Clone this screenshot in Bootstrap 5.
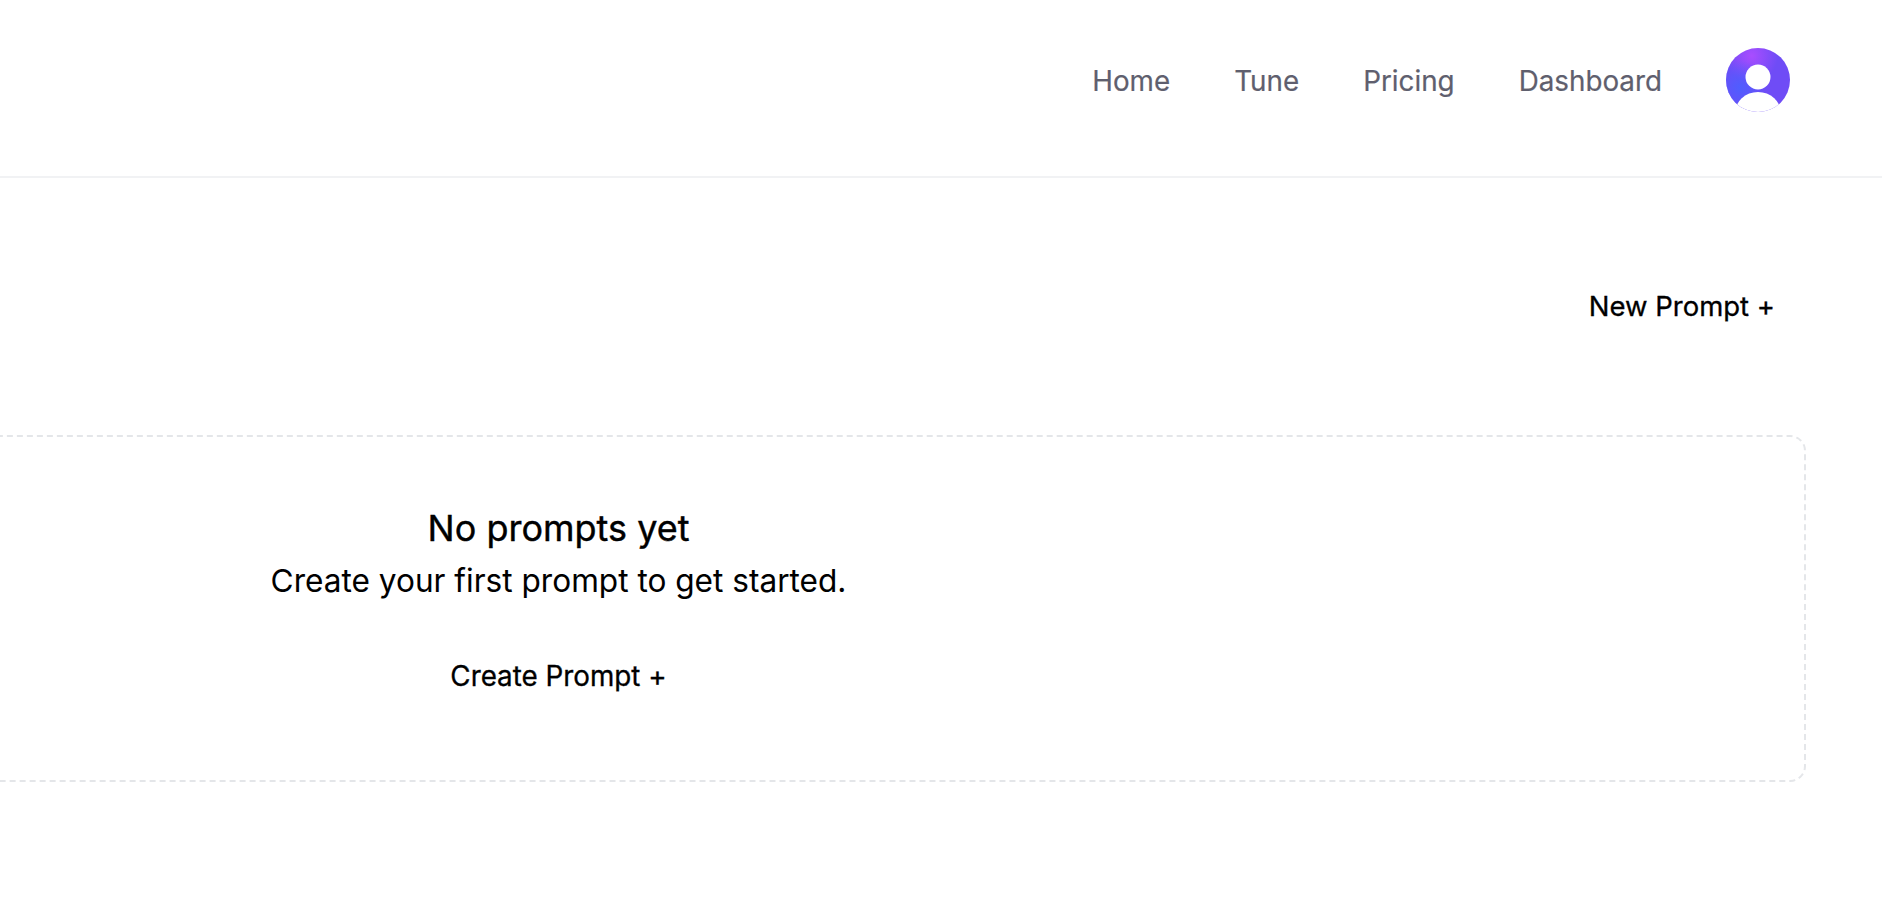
<!DOCTYPE html>
<html lang="en">
<head>
  <meta charset="UTF-8">
  <title>Prompts</title>
  <link href="https://cdn.jsdelivr.net/npm/bootstrap@5.3.0/dist/css/bootstrap.min.css" rel="stylesheet">
  <style>
    html, body { overflow: hidden; }
    body { font-family: Inter, "Liberation Sans", sans-serif; background: #fff; color: #000; }
    .top-bar { height: 178px; padding: 0 92px 16px 0; border-bottom: 2px solid #f1f2f4; background: #fff; }
    .top-links { gap: 64px; margin-right: 64px; }
    .top-links a { font-size: 27.8px; font-weight: 400; line-height: 44px; padding-top: 1px; color: #5f5f6e; text-decoration: none; -webkit-text-stroke: 0.2px #5f5f6e; }
    .avatar-pic { width: 64px; height: 64px; display: block; }
    .action-link { font-size: 27.5px; font-weight: 400; color: #000; text-decoration: none; -webkit-text-stroke: 0.3px #000; }
    .head-row { height: 257px; padding-right: 107px; }
    .empty-box {
      width: 2495px; height: 347px; margin-left: -689px; padding-top: 70px;
      border: 2px dashed #e4e6e9; border-radius: 16px;
    }
    .empty-box h3 { font-size: 36px; font-weight: 400; margin: 0 0 7px; -webkit-text-stroke: 0.4px #000; }
    .empty-box p { font-size: 31.6px; font-weight: 400; margin: 0 0 51px; }
    .empty-box .action-link { font-size: 27.8px; }
  </style>
</head>
<body>
  <nav class="top-bar d-flex align-items-center justify-content-end">
    <div class="top-links d-flex align-items-center">
      <a href="#">Home</a>
      <a href="#">Tune</a>
      <a href="#">Pricing</a>
      <a href="#">Dashboard</a>
    </div>
    <svg class="avatar-pic" viewBox="0 0 64 64">
      <defs>
        <radialGradient id="av" cx="0.4" cy="0.12" r="0.75">
          <stop offset="0" stop-color="#a94dff"/>
          <stop offset="0.55" stop-color="#6f4cf6"/>
          <stop offset="1" stop-color="#6f4cf6"/>
        </radialGradient>
        <radialGradient id="av2" cx="0.22" cy="0.62" r="0.42">
          <stop offset="0" stop-color="#4f5dff"/>
          <stop offset="1" stop-color="#4f5dff" stop-opacity="0"/>
        </radialGradient>
        <clipPath id="avc"><circle cx="32" cy="32" r="32"/></clipPath>
      </defs>
      <circle cx="32" cy="32" r="32" fill="url(#av)"/>
      <circle cx="32" cy="32" r="32" fill="url(#av2)"/>
      <circle cx="32" cy="29" r="12.5" fill="#fff"/>
      <ellipse cx="32" cy="65" rx="23" ry="21" fill="#fff" clip-path="url(#avc)"/>
    </svg>
  </nav>
  <div class="head-row d-flex align-items-center justify-content-end">
    <a class="action-link" href="#">New Prompt +</a>
  </div>
  <div class="empty-box d-flex flex-column align-items-center text-center">
    <h3>No prompts yet</h3>
    <p>Create your first prompt to get started.</p>
    <a class="action-link" href="#">Create Prompt +</a>
  </div>
  <script src="https://cdn.jsdelivr.net/npm/bootstrap@5.3.0/dist/js/bootstrap.bundle.min.js"></script>
</body>
</html>
